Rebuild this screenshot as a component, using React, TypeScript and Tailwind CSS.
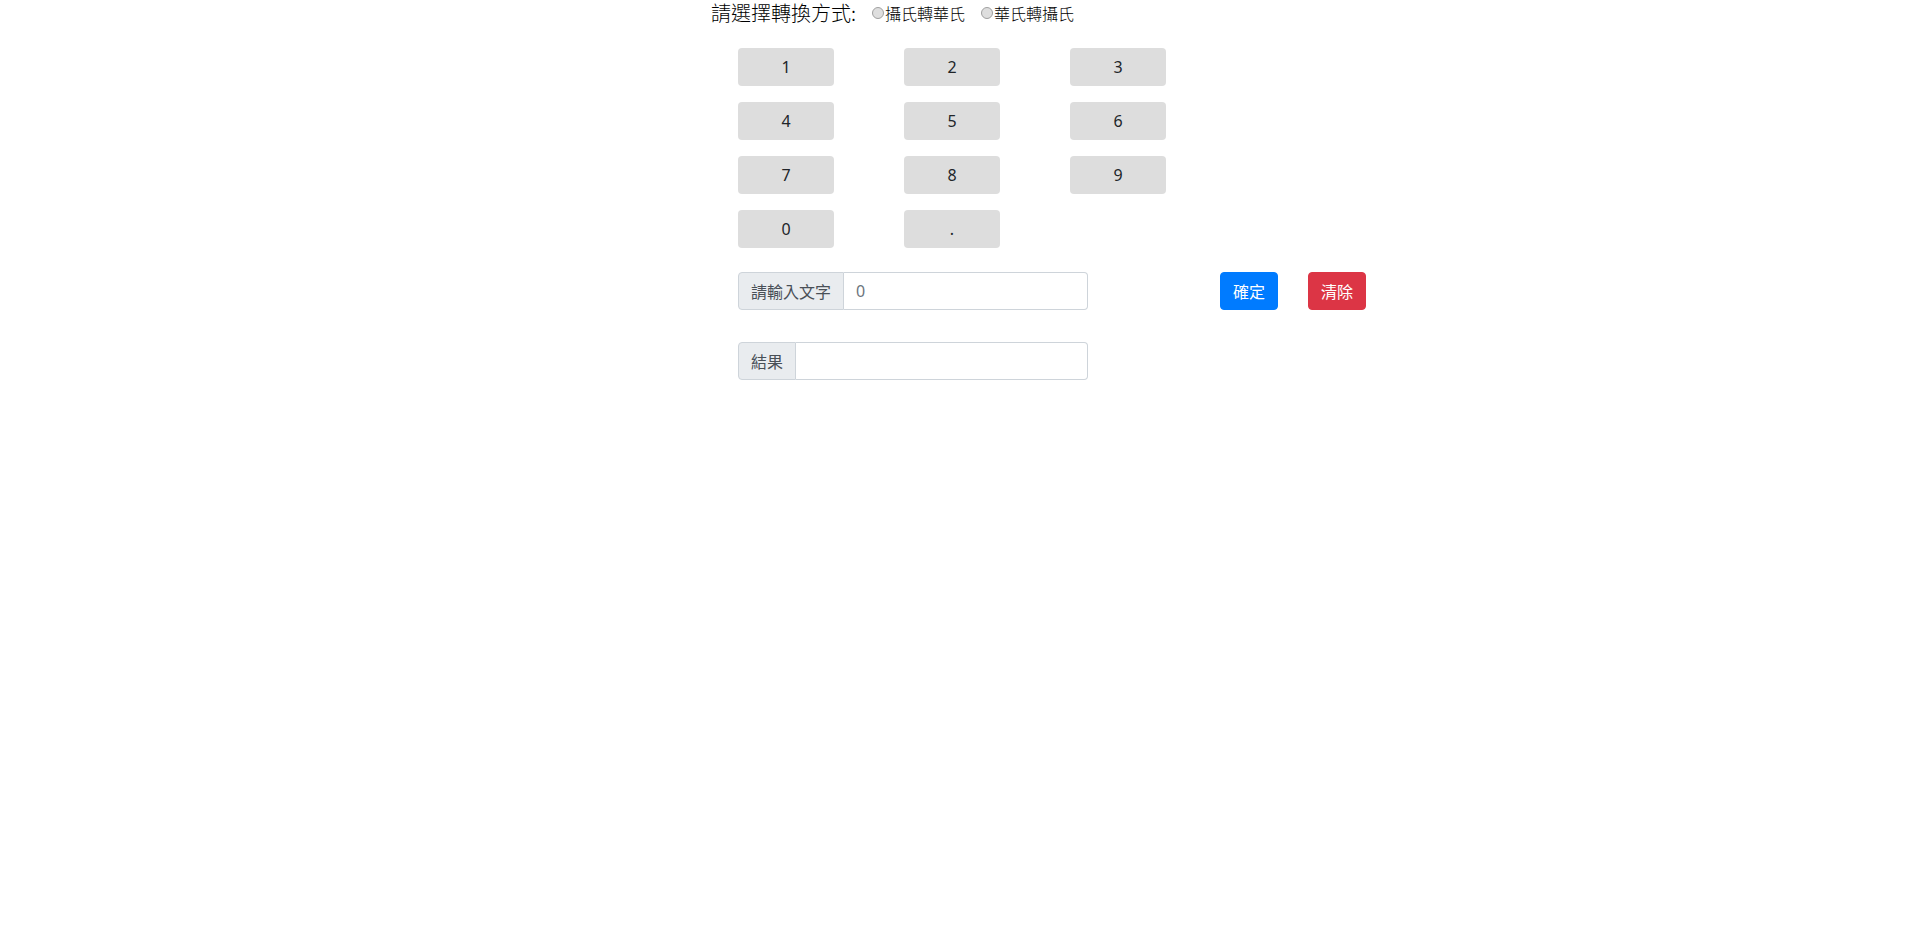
import { useState } from "react";

const KEYS = ["1", "2", "3", "4", "5", "6", "7", "8", "9", "0", "."];

const App = () => {
	const [mode, setMode] = useState("");
	const [value, setValue] = useState("");
	const [result, setResult] = useState("");

	const convert = () => {
		const n = parseFloat(value);
		if (isNaN(n)) return;
		if (mode === "c2f") setResult(String((n * 9) / 5 + 32));
		else if (mode === "f2c") setResult(String(((n - 32) * 5) / 9));
	};

	return (
		<div className="min-h-screen bg-white pl-[711px] text-[#212529] font-['Segoe_UI','Noto_Sans','Noto_Sans_CJK_TC',sans-serif]">
			<div className="flex items-center h-[26px] text-black">
				<span className="text-[20px] font-light font-['Noto_Sans_CJK_TC',sans-serif] leading-none">
					請選擇轉換方式:
				</span>
				<label className="flex items-center ml-4 text-[16px] font-light font-['Noto_Sans_CJK_TC',sans-serif] leading-none">
					<input
						type="radio"
						name="mode"
						checked={mode === "c2f"}
						onChange={() => setMode("c2f")}
						className="appearance-none m-0 mr-px size-[12px] rounded-full border border-[#a0a0a0] bg-[#dedede] checked:bg-[#555]"
					/>
					攝氏轉華氏
				</label>
				<label className="flex items-center ml-4 text-[16px] font-light font-['Noto_Sans_CJK_TC',sans-serif] leading-none">
					<input
						type="radio"
						name="mode"
						checked={mode === "f2c"}
						onChange={() => setMode("f2c")}
						className="appearance-none m-0 mr-px size-[12px] rounded-full border border-[#a0a0a0] bg-[#dedede] checked:bg-[#555]"
					/>
					華氏轉攝氏
				</label>
			</div>

			<div className="ml-[27px] mt-[22px] grid grid-cols-[96px_96px_96px] gap-x-[70px] gap-y-4">
				{KEYS.map((k) => (
					<button
						key={k}
						onClick={() => setValue((v) => v + k)}
						className="h-[38px] rounded bg-[#dddddd] text-[16px] text-[#212529]"
					>
						{k}
					</button>
				))}
			</div>

			<div className="ml-[27px] mt-6 flex items-center">
				<div className="flex w-[350px] h-[38px]">
					<span className="flex items-center px-3 bg-[#e9ecef] border border-[#ced4da] rounded-l text-[16px] text-[#495057] font-['Noto_Sans_CJK_TC',sans-serif]">
						請輸入文字
					</span>
					<input
						value={value}
						onChange={(e) => setValue(e.target.value)}
						placeholder="0"
						className="flex-1 min-w-0 px-3 border border-l-0 border-[#ced4da] rounded-r text-[16px] text-[#495057] placeholder:text-[#6c757d] outline-none"
					/>
				</div>
				<button
					onClick={convert}
					className="ml-[132px] h-[38px] w-[58px] rounded border border-[#007bff] bg-[#007bff] text-white text-[16px] font-['Noto_Sans_CJK_TC',sans-serif]"
				>
					確定
				</button>
				<button
					onClick={() => {
						setValue("");
						setResult("");
					}}
					className="ml-[30px] h-[38px] w-[58px] rounded border border-[#dc3545] bg-[#dc3545] text-white text-[16px] font-['Noto_Sans_CJK_TC',sans-serif]"
				>
					清除
				</button>
			</div>

			<div className="ml-[27px] mt-8 flex w-[350px] h-[38px]">
				<span className="flex items-center px-3 bg-[#e9ecef] border border-[#ced4da] rounded-l text-[16px] text-[#495057] font-['Noto_Sans_CJK_TC',sans-serif]">
					結果
				</span>
				<input
					value={result}
					readOnly
					className="flex-1 min-w-0 px-3 border border-l-0 border-[#ced4da] rounded-r text-[16px] text-[#495057] outline-none"
				/>
			</div>
		</div>
	);
};

export default App;
